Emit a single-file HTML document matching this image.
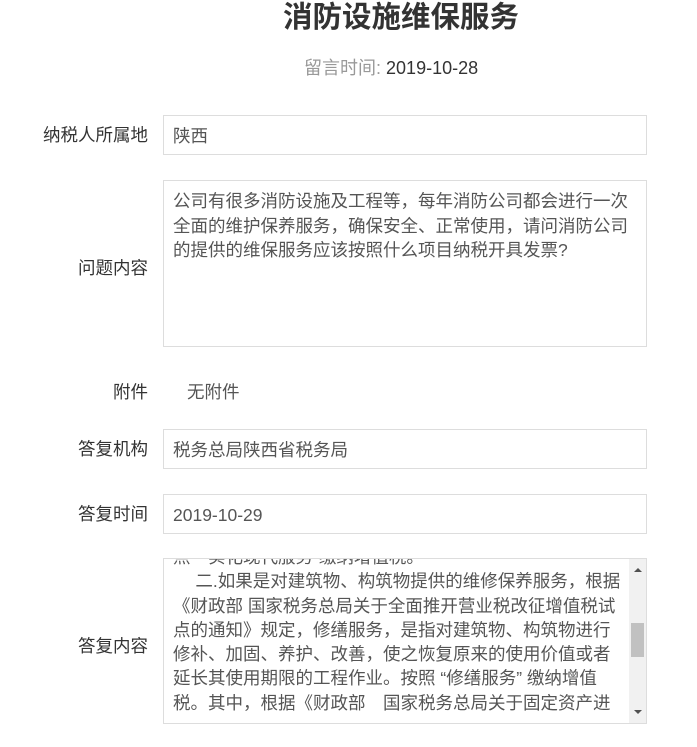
<!DOCTYPE html>
<html><head><meta charset="utf-8"><style>
body{margin:0;width:697px;height:747px;background:#fff;position:relative;overflow:hidden;font-family:"Liberation Sans","Noto Sans CJK SC",sans-serif;font-size:17.5px;color:#333}
.a{position:absolute;white-space:nowrap}
.lbl{position:absolute;right:549px;text-align:right;color:#333;white-space:nowrap;line-height:24px}
.box{position:absolute;left:163px;width:484px;border:1px solid #ddd;box-sizing:border-box;color:#555}
.box .t{position:absolute;left:9px;line-height:24px;white-space:nowrap}
</style></head><body>
<div class="a" style="left:283px;top:-1px;font-size:29.5px;font-weight:bold;color:#333;line-height:38px">消防设施维保服务</div>
<div class="a" style="left:304px;top:56px;line-height:24px;font-size:18px"><span style="color:#999">留言时间:</span> <span style="color:#333">2019-10-28</span></div>

<div class="lbl" style="top:123px">纳税人所属地</div>
<div class="box" style="top:115px;height:40px"><div class="t" style="top:8px">陕西</div></div>

<div class="lbl" style="top:256px">问题内容</div>
<div class="box" style="top:180px;height:167px"><div class="t" style="top:8px;line-height:24.5px">公司有很多消防设施及工程等，每年消防公司都会进行一次<br>全面的维护保养服务，确保安全、正常使用，请问消防公司<br>的提供的维保服务应该按照什么项目纳税开具发票?</div></div>

<div class="lbl" style="top:380px">附件</div>
<div class="a" style="left:187px;top:380px;line-height:24px;color:#555">无附件</div>

<div class="lbl" style="top:437px">答复机构</div>
<div class="box" style="top:429px;height:40px"><div class="t" style="top:8px">税务总局陕西省税务局</div></div>

<div class="lbl" style="top:502px">答复时间</div>
<div class="box" style="top:494px;height:40px"><div class="t" style="top:8px">2019-10-29</div></div>

<div class="lbl" style="top:634px">答复内容</div>
<div class="box" style="top:558px;height:166px;overflow:hidden">
<div class="t" style="top:-14px;line-height:24.3px">点一实化现代服务”缴纳增值税。<br>　 二.如果是对建筑物、构筑物提供的维修保养服务，根据<br>《财政部 国家税务总局关于全面推开营业税改征增值税试<br>点的通知》规定，修缮服务，是指对建筑物、构筑物进行<br>修补、加固、养护、改善，使之恢复原来的使用价值或者<br>延长其使用期限的工程作业。按照 “修缮服务” 缴纳增值<br>税。其中，根据《财政部　国家税务总局关于固定资产进</div>
<div style="position:absolute;right:0;top:0;width:17px;height:164px;background:#f1f1f1"></div>
<div style="position:absolute;right:2px;top:64px;width:13px;height:34px;background:#c1c1c1"></div>
<div style="position:absolute;right:4px;top:9px;width:0;height:0;border-left:4px solid transparent;border-right:4px solid transparent;border-bottom:4px solid #505050"></div>
<div style="position:absolute;right:4px;top:151px;width:0;height:0;border-left:4px solid transparent;border-right:4px solid transparent;border-top:4px solid #505050"></div>
</div>
</body></html>
